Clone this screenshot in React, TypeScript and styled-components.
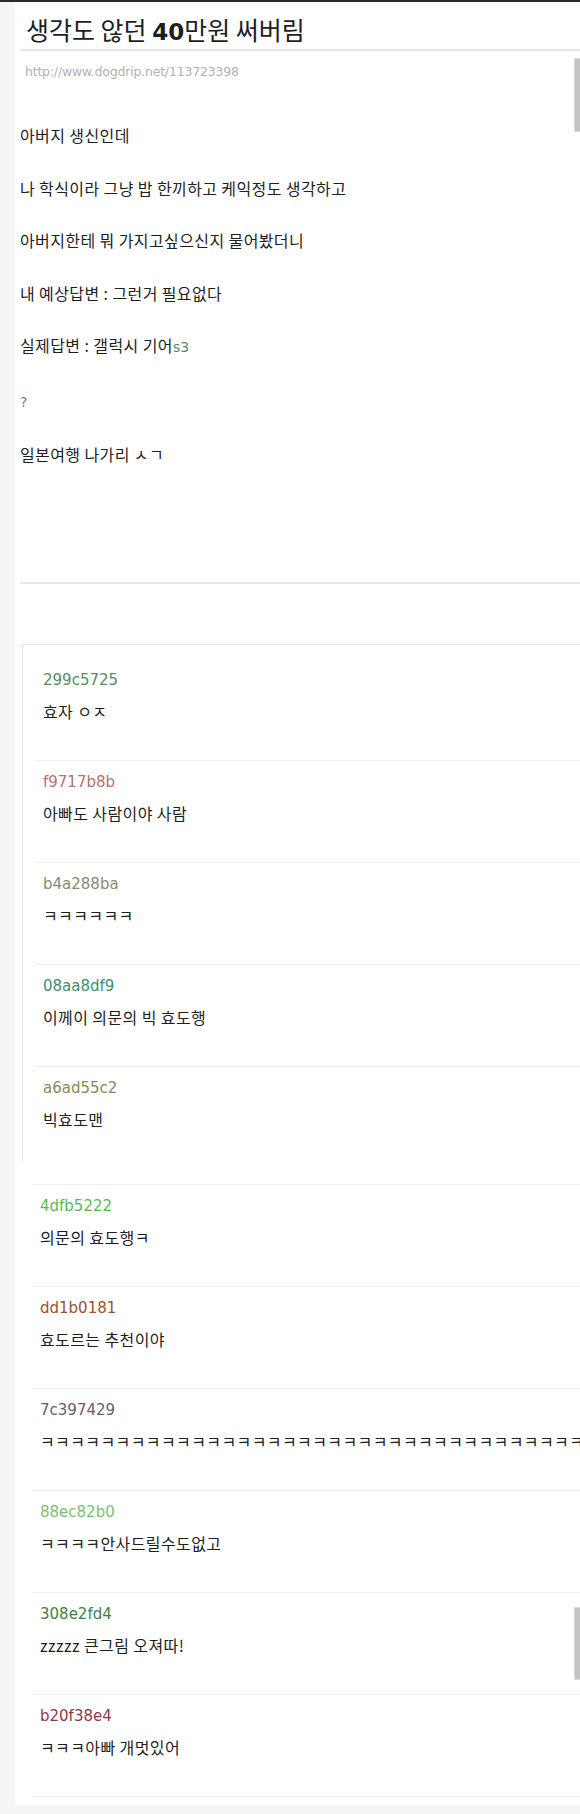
import React from 'react'
import styled, { createGlobalStyle } from 'styled-components'

const GlobalStyle = createGlobalStyle`
  html, body {
    margin: 0;
    padding: 0;
    background: #f5f5f5;
  }
  body {
    font-family: "Noto Sans CJK KR", "DejaVu Sans", sans-serif;
    color: #222;
  }
`

const bodyLines = [
  { text: '아버지 생신인데' },
  { text: '나 학식이라 그냥 밥 한끼하고 케익정도 생각하고' },
  { text: '아버지한테 뭐 가지고싶으신지 물어봤더니' },
  { text: '내 예상답변 : 그런거 필요없다' },
  { text: '실제답변 : 갤럭시 기어', tail: 's3' },
  { text: '', tail: '?' },
  { text: '일본여행 나가리 ㅅㄱ' },
]

// nickname colours as they come out in the capture (washed out a bit)
const boxed = [
  { id: '299c5725', color: '#4f8f63', text: '효자 ㅇㅈ' },
  { id: 'f9717b8b', color: '#b86f70', text: '아빠도 사람이야 사람' },
  { id: 'b4a288ba', color: '#8a8a72', text: 'ㅋㅋㅋㅋㅋㅋ' },
  { id: '08aa8df9', color: '#3c8f74', text: '이께이 의문의 빅 효도행' },
  { id: 'a6ad55c2', color: '#8a8a55', text: '빅효도맨' },
]

const loose = [
  { id: '4dfb5222', color: '#5cb852', text: '의문의 효도행ㅋ' },
  { id: 'dd1b0181', color: '#a0502e', text: '효도르는 추천이야' },
  { id: '7c397429', color: '#6e5a6a', text: 'ㅋ'.repeat(36) },
  { id: '88ec82b0', color: '#7cbf72', text: 'ㅋㅋㅋㅋ안사드릴수도없고' },
  { id: '308e2fd4', color: '#3f7f47', text: 'zzzzz 큰그림 오져따!' },
  { id: 'b20f38e4', color: '#8e3a48', text: 'ㅋㅋㅋ아빠 개멋있어' },
]

export default function App() {
  return (
    <Page>
      <GlobalStyle />
      <TopBar />
      <Layout>
        <Gutter />
        <Main>
          <Title>생각도 않던 <b>40</b>만원 써버림</Title>
          <Source>http://www.dogdrip.net/113723398</Source>
          <Article>
            {bodyLines.map((l, i) => (
              <Para key={i}>
                {l.text}
                {l.tail && <Tail>{l.tail}</Tail>}
              </Para>
            ))}
          </Article>
          <Divider />
          <CommentBox>
            {boxed.map((c, i) => (
              <Comment key={c.id} $first={i === 0} $short={i === boxed.length - 1}>
                <Nick $color={c.color}>{c.id}</Nick>
                <Body>{c.text}</Body>
              </Comment>
            ))}
          </CommentBox>
          <CommentList>
            {loose.map((c, i) => (
              <Comment key={c.id} $last={i === loose.length - 1}>
                <Nick $color={c.color}>{c.id}</Nick>
                <Body>{c.text}</Body>
              </Comment>
            ))}
          </CommentList>
        </Main>
      </Layout>
      <Thumb $top={58} $height={72} />
      <Thumb $top={1607} $height={71} />
    </Page>
  )
}

const Page = styled.div`
  position: relative;
  width: 580px;
  height: 1814px;
  overflow: hidden;
  background: #f5f5f5;
`

const TopBar = styled.div`
  height: 2px;
  background: #2a2a2a;
`

const Layout = styled.div`
  display: flex;
`

const Gutter = styled.div`
  width: 15px;
  flex: none;
`

const Main = styled.div`
  flex: 1;
  min-width: 0;
  background: #fff;
  padding-left: 5px;
  padding-bottom: 8px;
  overflow: hidden;
`

const Title = styled.h1`
  margin: 0;
  padding: 12px 0 5px 6px;
  height: 30px;
  font-size: 25px;
  line-height: 30px;
  font-weight: 400;
  color: #1e1e1e;
  border-bottom: 2px solid #e1e8df;
  white-space: nowrap;

  b {
    font-family: "DejaVu Sans", sans-serif;
    font-weight: 700;
    font-size: 23px;
  }
`

const Source = styled.div`
  margin: 13px 0 0 5px;
  font-family: "DejaVu Sans", sans-serif;
  font-size: 12.5px;
  line-height: 16px;
  color: #b2b2b2;
  letter-spacing: -0.2px;
`

const Article = styled.div`
  display: flex;
  flex-direction: column;
  padding-top: 45px;
`

const Para = styled.p`
  margin: 0 0 31.5px;
  font-size: 16px;
  line-height: 21px;
  letter-spacing: 0.4px;
  color: #1e1e1e;
  white-space: nowrap;
`

const Tail = styled.span`
  font-family: "DejaVu Sans", sans-serif;
  font-size: 14px;
  letter-spacing: 0;
  color: #5f8a6a;
`

const Divider = styled.div`
  margin-top: 85px;
  height: 2px;
  background: #e8e8e8;
`

const CommentBox = styled.div`
  margin-top: 60px;
  margin-left: 2px;
  padding-top: 14px;
  border-top: 1px solid #dfe6dd;
  border-left: 1px solid #dfe6dd;
`

const CommentList = styled.div`
  padding-top: 23px;
`

const Comment = styled.div<{ $first?: boolean; $short?: boolean; $last?: boolean }>`
  margin-left: 12px;
  padding: 11px 0 ${(p) => (p.$short ? 32 : 39)}px 8px;
  border-top: ${(p) => (p.$first ? 'none' : '1px solid #eeeeee')};
  border-bottom: ${(p) => (p.$last ? '1px solid #eeeeee' : 'none')};
`

const Nick = styled.div<{ $color: string }>`
  font-family: "DejaVu Sans", sans-serif;
  font-size: 15px;
  line-height: 20px;
  color: ${(p) => p.$color};
`

const Body = styled.div`
  margin-top: 11px;
  font-size: 16px;
  line-height: 20px;
  letter-spacing: 0.4px;
  color: #1e1e1e;
  white-space: nowrap;
`

const Thumb = styled.div<{ $top: number; $height: number }>`
  position: absolute;
  right: 0;
  top: ${(p) => p.$top}px;
  width: 5px;
  height: ${(p) => p.$height}px;
  background: #c4c4c4;
  border: 1px solid #dadada;
  border-right: none;
`
